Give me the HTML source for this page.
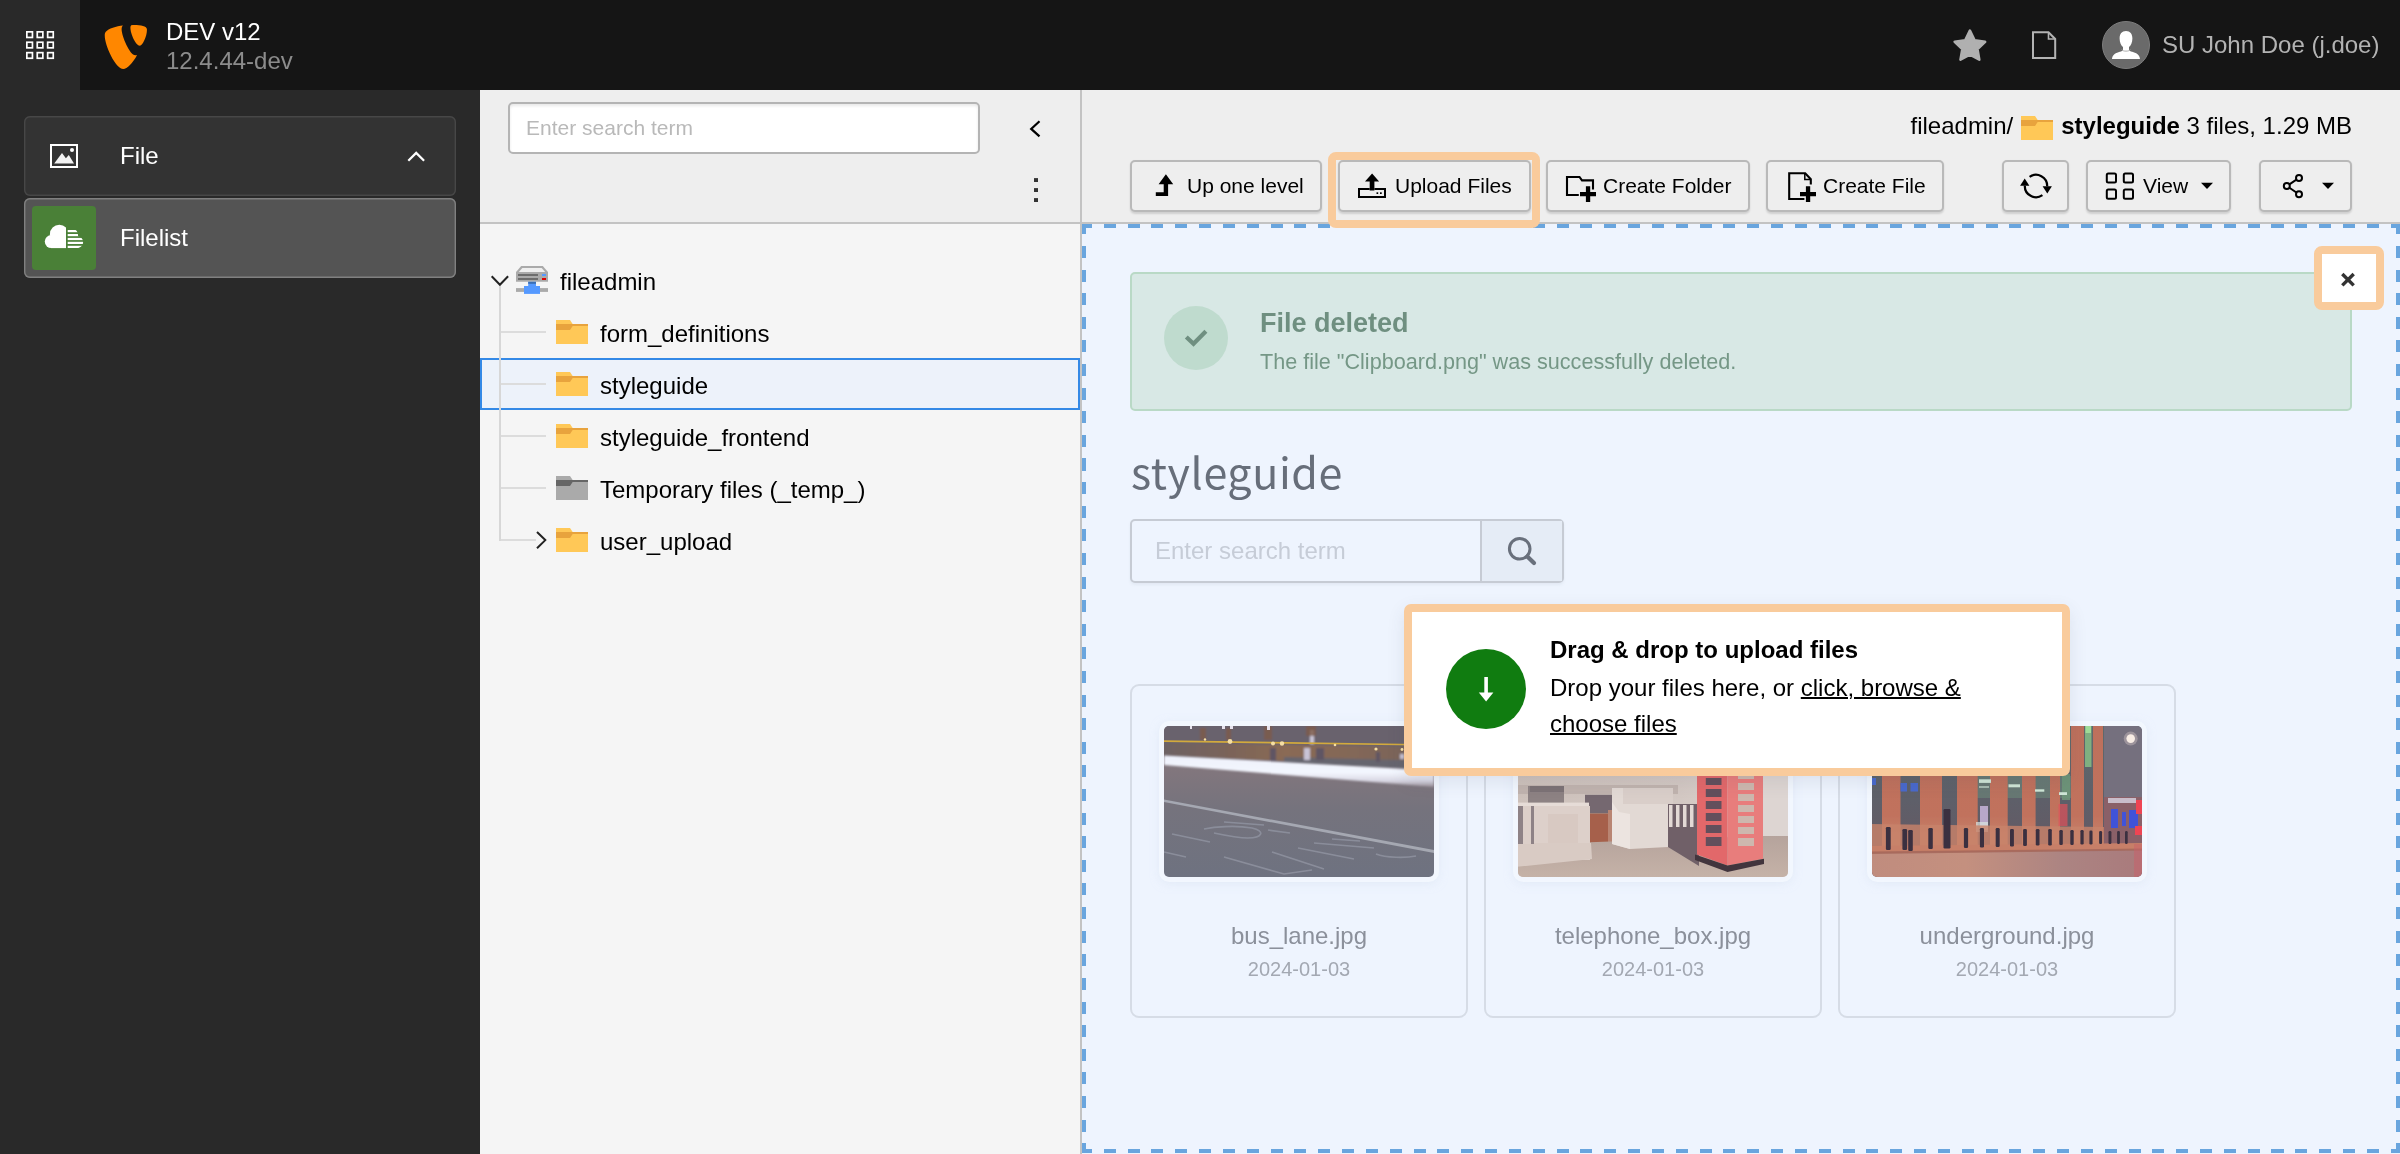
<!DOCTYPE html>
<html lang="en">
<head>
<meta charset="utf-8">
<title>TYPO3 Filelist</title>
<style>
*{box-sizing:border-box;margin:0;padding:0}
html,body{width:2400px;height:1154px;overflow:hidden;background:#292929}
body{will-change:transform;font-family:"Liberation Sans",sans-serif;font-size:24px;color:#000;position:relative}
svg{display:block;position:absolute;overflow:visible}
/* topbar */
#topbar{position:absolute;left:0;top:0;width:2400px;height:90px;background:#151515}
#toggle{position:absolute;left:0;top:0;width:80px;height:90px;background:#292929}
#site{position:absolute;left:166px;top:17px;color:#fff;font-size:24px;line-height:29px;white-space:nowrap}
#site .ver{color:#8c8c8c;display:block}
#user{position:absolute;left:2162px;top:31px;color:#b3b3b3;font-size:24px;line-height:28px;white-space:nowrap}
#avatar{position:absolute;left:2102px;top:21px;width:48px;height:48px;border-radius:50%;background:#6a6a6a;border:1px solid #7d7d7d;overflow:hidden}
/* sidebar */
#sidebar{position:absolute;left:0;top:90px;width:480px;height:1064px;background:#292929}
.mgroup{position:absolute;left:24px;top:26px;width:432px;height:80px;border-radius:6px;background:#333;box-shadow:inset 0 0 0 1.400px #474747}
.mitem{position:absolute;left:24px;top:108px;width:432px;height:80px;border-radius:6px;background:#545454;box-shadow:inset 0 0 0 1.400px #808080}
.mlabel{position:absolute;left:96px;top:26px;color:#fff;font-size:24px;line-height:28px}
.micon{position:absolute;left:8px;top:8px;width:64px;height:64px;border-radius:4px;background:#4a8037}
/* tree */
#tree{position:absolute;left:480px;top:90px;width:600px;height:1064px;background:#f5f5f5}
#treebar{position:absolute;left:0;top:0;width:600px;height:134px;background:#eee;border-bottom:2px solid #c3c3c3}
.tsearch{position:absolute;left:28px;top:12px;width:472px;height:52px;border:2px solid #b4b4b4;border-radius:5px;background:#fff;color:#b9b9b9;font-size:21px;line-height:48px;padding-left:16px;box-shadow:inset 0 2px 3px rgba(0,0,0,.09)}
.trow{position:absolute;left:0;width:600px;height:52px;font-size:24px;line-height:52px;white-space:nowrap}
.trow span{position:absolute;top:2px}
.trow.sel{background:#edf2fa;border:2px solid #3489e6}
.trow.sel span{top:0px;margin-left:-2px}
.vline{z-index:1;position:absolute;left:19px;top:196px;width:2px;height:255px;background:#d7d7d7}
.hline{position:absolute;left:21px;width:45px;height:2px;background:#dcdcdc}
/* content */
#content{position:absolute;left:1080px;top:90px;width:1320px;height:1064px;background:#eef4fe;border-left:2px solid #c3c3c3}
#dochead{position:absolute;left:0;top:0;width:1318px;height:134px;background:#eee;border-bottom:2px solid #c3c3c3}
.path{position:absolute;right:48px;top:20px;font-size:24px;line-height:32px;white-space:nowrap}
.path b{margin-left:0}.path svg{position:relative;display:inline-block;vertical-align:top;top:2px;margin:0 8px 0 8px}
.btn{position:absolute;top:70px;height:52px;border:2px solid #b9b9b9;border-radius:5px;background:#eee;box-shadow:0 1.500px 2px rgba(0,0,0,.13);font-size:21px;line-height:47px;white-space:nowrap;color:#000}
.btn span{position:absolute;top:0}
.hl{position:absolute;border:8px solid #f9cb9c;border-radius:8px}
#drop{position:absolute;left:0;top:134px;width:1318px;height:930px;background:#eef4fe;border:4px solid transparent;background-clip:border-box}
.dh{left:-4px;width:1318px;height:4px;background:repeating-linear-gradient(90deg,#69a5de -2px,#69a5de 10px,transparent 10px,transparent 21.830px)}
.dv{top:-4px;width:4px;height:929px;background:repeating-linear-gradient(180deg,#69a5de -1.600px,#69a5de 10.400px,transparent 10.400px,transparent 22.010px)}
#drop>*{position:absolute}
.alert{left:44px;top:44px;width:1222px;height:139px;border:2px solid #b9d9c6;border-radius:5px;background:#d8e8e5}
.alert .circ{position:absolute;left:32px;top:32px;width:64px;height:64px;border-radius:50%;background:#bfdbce}
.alert .ttl{position:absolute;left:128px;top:33px;font-size:27px;line-height:32px;font-weight:700;color:#6f8f80;white-space:nowrap}
.alert .msg{position:absolute;left:128px;top:73.500px;font-size:21.6px;line-height:28px;color:#759786;white-space:nowrap}
h1{left:45px;top:209px;letter-spacing:.6px;font-family:"Noto Sans CJK SC","Liberation Sans",sans-serif;font-weight:400;font-size:43px;line-height:66px;color:#676e7a;white-space:nowrap}
.search{left:44px;top:291px;width:434px;height:64px;border:2px solid #c6cbd4;border-radius:5px;background:#eef4fe;box-shadow:0 2px 3px rgba(100,110,130,.08)}
.search .ph{position:absolute;left:23px;top:0;font-size:24px;line-height:59px;color:#c6ccd7;white-space:nowrap}
.search .sb{position:absolute;left:348px;top:0;width:82px;height:60px;border-left:2px solid #c6cbd4;background:#e5ecf6}
.card{top:456px;width:338px;height:334px;border:2px solid #d6dce6;border-radius:9px;text-align:center}
.card .th{position:absolute;left:32px;top:40px;width:270px;height:151px;border-radius:5px;overflow:hidden;box-shadow:0 0 0 5px rgba(243,247,254,.9),0 2px 10px 4px rgba(214,224,240,.55)}
.card .fn{position:absolute;left:0;width:100%;top:234px;font-size:24px;line-height:32px;color:#8b909b;white-space:nowrap}
.card .dt{position:absolute;left:0;width:100%;top:269px;font-size:20px;line-height:28px;color:#a3a8b2;white-space:nowrap}
.pop{left:318px;top:376px;width:666px;height:172px;border:8px solid #f9cb9c;border-radius:7px;background:#fff;box-shadow:0 6px 18px rgba(60,70,90,.10)}
.pop .gc{position:absolute;left:34px;top:37px;width:80px;height:80px;border-radius:50%;background:#107c10}
.pop .ttl{position:absolute;left:138px;top:20px;font-size:24px;line-height:36px;font-weight:700;white-space:nowrap}
.pop .txt{position:absolute;left:138px;top:58px;width:480px;font-size:24px;line-height:36px}

.close{left:1228px;top:18px;width:70px;height:64px;border:8px solid #f9cb9c;border-radius:8px;background:#fff}
.pop .txt u{text-decoration-thickness:1.500px}
</style>
</head>
<body>
<div id="topbar">
  <div id="toggle"><svg style="left:24px;top:29px" width="32" height="32" viewBox="24 29 32 32" ><g fill="none" stroke="#fff" stroke-width="1.7"><rect x="26.85" y="31.85" width="5.6" height="5.6"/><rect x="37.25" y="31.85" width="5.6" height="5.6"/><rect x="47.65" y="31.85" width="5.6" height="5.6"/><rect x="26.85" y="42.25" width="5.6" height="5.6"/><rect x="37.25" y="42.25" width="5.6" height="5.6"/><rect x="47.65" y="42.25" width="5.6" height="5.6"/><rect x="26.85" y="52.65" width="5.6" height="5.6"/><rect x="37.25" y="52.65" width="5.6" height="5.6"/><rect x="47.65" y="52.65" width="5.6" height="5.6"/></g></svg></div>
  <svg style="left:96.500px;top:18.400px" width="56.300" height="56.300" viewBox="0 0 16 16"><path fill="#ff8700" d="M11.4 10.5c-.2.1-.3.1-.5.1-1.6 0-3.900-5.500-3.900-7.400 0-.7.200-.9.400-1.100-1.900.2-4.200.9-4.900 1.800-.2.200-.3.600-.3 1.100 0 2.900 3.100 9.500 5.300 9.500 1 0 2.700-1.700 3.900-4M10.600 2c1.800 0 3.600.3 3.600 1.300 0 2.100-1.300 4.600-2 4.600-1.200 0-2.700-3.400-2.700-5.100 0-.8.300-.8 1.100-.8"/></svg>
  <div id="site">DEV v12<span class="ver">12.4.44-dev</span></div>
  <svg style="left:1950px;top:25px" width="40" height="40" viewBox="1950 25 40 40" ><polygon points="1969.90,30.70 1974.60,40.23 1985.12,41.76 1977.51,49.17 1979.30,59.64 1969.90,54.70 1960.50,59.64 1962.29,49.17 1954.68,41.76 1965.20,40.23" fill="#b0b0b0" stroke="#b0b0b0" stroke-width="2.600" stroke-linejoin="round"/></svg>
  <svg style="left:2030px;top:29px" width="28" height="32" viewBox="2030 29 28 32" ><path d="M2033 32.2H2048.5L2055.2 39V58H2033Z" fill="none" stroke="#b3b3b3" stroke-width="2"/><path d="M2048.5 32.2V39H2055.2" fill="none" stroke="#b3b3b3" stroke-width="1.6"/></svg>
  <div id="avatar"><svg style="left:0px;top:0px" width="46" height="46" viewBox="2103 22 46 46" ><path d="M2126 31c4.200 0 6.400 3 6.400 7.400 0 3.600-1.600 7.200-3.400 8.600v2.200c0 1.400 1.200 2 3.200 2.600 3.800 1.100 7.300 2.600 7.800 7.200h-28c.5-4.600 4-6.100 7.800-7.200 2-.6 3.200-1.200 3.200-2.600v-2.200c-1.800-1.400-3.400-5-3.400-8.600 0-4.400 2.200-7.400 6.400-7.400z" fill="#fff"/><path d="M2121.500 49.500c1.300 2.200 7.700 2.200 9 0" fill="none" stroke="#999" stroke-width=".8"/></svg></div>
  <div id="user">SU John Doe (j.doe)</div>
</div>
<div id="sidebar">
  <div class="mgroup"><svg style="left:24px;top:26px" width="32" height="28" viewBox="48 142 32 28" ><rect x="51" y="145" width="26" height="22" fill="none" stroke="#fff" stroke-width="2"/><path d="M54.200 163.500L62 153l3.900 5.200 2.900-3.200 5.200 8.500z" fill="#f2f2f2"/><circle cx="72" cy="150" r="2" fill="#fff"/></svg><div class="mlabel">File</div><svg style="left:380px;top:32px" width="24" height="18" viewBox="404 148 24 18" ><path d="M408.300 160.800L416.200 152.900 424.100 160.800" fill="none" stroke="#fff" stroke-width="2.200"/></svg></div>
  <div class="mitem"><div class="micon"><svg style="left:0px;top:0px" width="64" height="64" viewBox="32 206 64 64" ><clipPath id="cl"><rect x="40" y="220" width="26" height="32"/></clipPath><g clip-path="url(#cl)" fill="#fff"><circle cx="59.300" cy="234.200" r="9.400"/><circle cx="51.300" cy="241.600" r="6.500"/><rect x="51" y="238" width="20" height="10.100"/></g><clipPath id="cr"><path d="M67 229.500h6.500c3 0 4.600 2.600 4.600 6.700 3 .6 5 3 5 5.900 0 3.600-2.600 6-6 6H67z"/></clipPath><g clip-path="url(#cr)" fill="#fff"><rect x="67.700" y="230" width="18" height="2.200"/><rect x="67.700" y="234" width="18" height="2.200"/><rect x="67.700" y="237.9" width="18" height="2.200"/><rect x="67.700" y="241.8" width="18" height="2.200"/><rect x="67.700" y="245.8" width="18" height="2.200"/></g></svg></div><div class="mlabel">Filelist</div></div>
</div>
<div id="tree">
  <div id="treebar"><div class="tsearch">Enter search term</div><svg style="left:546px;top:26px" width="20" height="26" viewBox="1026 116 20 26" ><path d="M1039.500 121.300L1031.200 128.900 1039.500 136.400" fill="none" stroke="#000" stroke-width="2.200"/></svg><svg style="left:552px;top:86px" width="8" height="28" viewBox="1032 176 8 28" ><g fill="#333"><rect x="1034" y="178.100" width="4" height="3.900"/><rect x="1034" y="188.100" width="4" height="3.900"/><rect x="1034" y="198.100" width="4" height="3.900"/></g></svg></div>
  <div class="vline"></div>
  <div class="hline" style="top:241px"></div>
  <div class="hline" style="top:345px"></div>
  <div class="hline" style="top:397px"></div>
  <div class="hline" style="top:449px;width:35px"></div>
  <div class="trow" style="top:164px"><svg style="left:8px;top:18px" width="24" height="18" viewBox="488 272 24 18" ><path d="M491.700 276.300L499.900 284.800 508.100 276.300" fill="none" stroke="#222" stroke-width="2"/></svg><svg style="left:36px;top:10px" width="32" height="32" viewBox="516 264 32 32" ><path d="M521.200 266h21.600l5.200 6v9.800h-32V272z" fill="#aaa"/><path d="M522.300 268h19.400l3.500 4h-26.400z" fill="#efefef"/>
<rect x="518" y="274.100" width="20" height="1.800" fill="#666"/><rect x="518" y="278.100" width="20" height="1.800" fill="#666"/>
<rect x="542" y="274" width="4" height="2" fill="#59f"/><rect x="542" y="278" width="4" height="2" fill="#d00"/>
<rect x="516" y="288.100" width="32" height="3.800" fill="#aaa"/>
<rect x="528.200" y="281.800" width="7.800" height="5" fill="#59f"/><rect x="528.200" y="281.800" width="7.800" height="2" fill="#3b6fb5"/>
<rect x="524" y="286" width="16" height="7.900" fill="#59f"/></svg><span style="left:80px">fileadmin</span></div>
  <div class="trow" style="top:216px"><svg style="left:76px;top:10px" width="32" height="32" viewBox="0 0 32 32"><path d="M0 4h14l2.660 4H32v20H0z" fill="#ffc857"/><path d="M32 10H16.660L14 14H0V8h32z" fill="#e8a33d"/></svg><span style="left:120px">form_definitions</span></div>
  <div class="trow sel" style="top:268px"><div class="hline" style="left:19px;top:23px"></div><svg style="left:74px;top:8px" width="32" height="32" viewBox="0 0 32 32"><path d="M0 4h14l2.660 4H32v20H0z" fill="#ffc857"/><path d="M32 10H16.660L14 14H0V8h32z" fill="#e8a33d"/></svg><span style="left:120px">styleguide</span></div>
  <div class="trow" style="top:320px"><svg style="left:76px;top:10px" width="32" height="32" viewBox="0 0 32 32"><path d="M0 4h14l2.660 4H32v20H0z" fill="#ffc857"/><path d="M32 10H16.660L14 14H0V8h32z" fill="#e8a33d"/></svg><span style="left:120px">styleguide_frontend</span></div>
  <div class="trow" style="top:372px"><svg style="left:76px;top:10px" width="32" height="32" viewBox="0 0 32 32"><path d="M0 4h14l2.660 4H32v20H0z" fill="#aaa"/><path d="M32 10H16.660L14 14H0V8h32z" fill="#666"/></svg><span style="left:120px">Temporary files (_temp_)</span></div>
  <div class="trow" style="top:424px"><svg style="left:52px;top:14px" width="18" height="24" viewBox="532 528 18 24" ><path d="M537 532l8.300 8.100-8.300 8.100" fill="none" stroke="#222" stroke-width="2"/></svg><svg style="left:76px;top:10px" width="32" height="32" viewBox="0 0 32 32"><path d="M0 4h14l2.660 4H32v20H0z" fill="#ffc857"/><path d="M32 10H16.660L14 14H0V8h32z" fill="#e8a33d"/></svg><span style="left:120px">user_upload</span></div>
</div>
<div id="content">
  <div id="dochead">
    <div class="path">fileadmin/<svg width="32" height="32" viewBox="0 0 32 32"><path d="M0 4h14l2.660 4H32v20H0z" fill="#ffc857"/><path d="M32 10H16.660L14 14H0V8h32z" fill="#e8a33d"/></svg><b>styleguide</b> 3 files, 1.29 MB</div>
    <div class="btn" style="left:48px;width:192px"><svg style="left:20px;top:8px" width="26" height="30" viewBox="1152 170 26 30" ><path d="M1165.900 174.200L1173.200 184.300H1168.100V196H1155.800V192.300H1163.700V184.300H1158.600Z" fill="#000"/></svg><span style="left:55px">Up one level</span></div>
    <div class="btn" style="left:256px;width:193px"><svg style="left:16px;top:8px" width="32" height="30" viewBox="1356 170 32 30" ><path d="M1372.100 173.400L1379.100 181.600H1374.400V190.500H1369.700V181.600H1365Z" fill="#000"/><path d="M1369.700 189H1359V197H1385V189H1374.400" fill="none" stroke="#000" stroke-width="2"/><rect x="1376.500" y="192.300" width="1.700" height="1.700"/><rect x="1380" y="192.300" width="1.700" height="1.700"/></svg><span style="left:55px">Upload Files</span></div>
    <div class="btn" style="left:464px;width:204px"><svg style="left:16px;top:10px" width="34" height="32" viewBox="1564 172 34 32" ><path d="M1578.800 195H1567V177H1579.500L1582 180.400H1593V189.500" fill="none" stroke="#000" stroke-width="2.100"/><path d="M1580 192H1596V196.300H1580zM1585.900 186.200H1590.200V201.900H1585.900z" fill="#000"/></svg><span style="left:55px">Create Folder</span></div>
    <div class="btn" style="left:684px;width:178px"><svg style="left:18px;top:8px" width="32" height="34" viewBox="1786 170 32 34" ><path d="M1804.400 199H1789.200V173.200H1805.200L1810.800 179.200V184.500" fill="none" stroke="#000" stroke-width="2.100"/><path d="M1804.800 173.500V179.600H1810.600" fill="none" stroke="#000" stroke-width="1.500"/><path d="M1800 192H1816V196.300H1800zM1805.900 186.200H1810.200V201.900H1805.900z" fill="#000"/></svg><span style="left:55px">Create File</span></div>
    <div class="btn" style="left:920px;width:67px"><svg style="left:14px;top:8px" width="36" height="32" viewBox="2018 170 36 32" ><path d="M2029.58 176.83A11.2 11.2 0 0 1 2047.19 186.39" fill="none" stroke="#000" stroke-width="2.200"/><path d="M2024.81 185.61A11.2 11.2 0 0 0 2042.42 195.17" fill="none" stroke="#000" stroke-width="2.200"/><path d="M2024.700 178.600L2029.400 185.800H2020.100Z" fill="#000"/><path d="M2047.300 193.400L2042.600 186.200H2051.900Z" fill="#000"/></svg></div>
    <div class="btn" style="left:1004px;width:145px"><svg style="left:16px;top:8px" width="32" height="32" viewBox="2104 170 32 32" ><g fill="none" stroke="#000" stroke-width="2"><rect x="2106.8" y="173.4" width="9.200" height="9.200" rx="1.500"/><rect x="2106.8" y="189.6" width="9.200" height="9.200" rx="1.500"/><rect x="2123.8" y="173.4" width="9.200" height="9.200" rx="1.500"/><rect x="2123.8" y="189.6" width="9.200" height="9.200" rx="1.500"/></g></svg><span style="left:55px">View</span><svg style="left:112px;top:19px" width="14" height="9" viewBox="2200 181 14 9" ><path d="M2201 182.800H2213L2207 188.900Z" fill="#000"/></svg></div>
    <div class="btn" style="left:1177px;width:93px"><svg style="left:19px;top:10px" width="26" height="28" viewBox="2280 172 26 28" ><g fill="none" stroke="#000" stroke-width="2"><circle cx="2299" cy="178" r="3"/><circle cx="2286.800" cy="186" r="3"/><circle cx="2299" cy="194.200" r="3"/><path d="M2289.400 184.300L2296.400 179.700M2289.400 187.700L2296.400 192.500"/></g></svg><svg style="left:60px;top:19px" width="14" height="9" viewBox="2321 181 14 9" ><path d="M2322 182.800H2334L2328 188.900Z" fill="#000"/></svg></div>
  </div>
  <div id="drop">
    <div class="dh" style="top:-4px"></div><div class="dh" style="top:921px"></div><div class="dv" style="left:-4px"></div><div class="dv" style="left:1310px"></div>
    <div class="alert"><div class="circ"><svg style="left:16px;top:18px" width="32" height="28" viewBox="1180 324 32 28" ><path d="M1186.300 337L1193.500 343.800 1205.900 331.300" fill="none" stroke="#6f8f80" stroke-width="4.200"/></svg></div><div class="ttl">File deleted</div><div class="msg">The file "Clipboard.png" was successfully deleted.</div></div>
    <h1>styleguide</h1>
    <div class="search"><div class="ph">Enter search term</div><div class="sb"><svg style="left:22px;top:13px" width="36" height="36" viewBox="1504 534 36 36" ><circle cx="1519.700" cy="548.800" r="10.300" fill="none" stroke="#69707c" stroke-width="3"/><path d="M1527.300 556.400L1534 563" fill="none" stroke="#69707c" stroke-width="4.200" stroke-linecap="round"/></svg></div></div>
    <div class="card" style="left:44px"><div class="th"><svg style="left:0;top:0" width="270" height="151" viewBox="0 0 270 151" preserveAspectRatio="none"><defs>
<linearGradient id="b1" x1="0" y1="0" x2="0" y2="1"><stop offset="0" stop-color="#857a80"/><stop offset=".3" stop-color="#81767d"/><stop offset=".55" stop-color="#75737d"/><stop offset="1" stop-color="#6e7280"/></linearGradient>
<linearGradient id="b2" x1="0" y1="0" x2="1" y2="0"><stop offset="0" stop-color="#6c6264"/><stop offset=".22" stop-color="#79635a"/><stop offset=".45" stop-color="#8a6a54"/><stop offset=".7" stop-color="#836758"/><stop offset="1" stop-color="#75635c"/></linearGradient>
<linearGradient id="b3" x1="0" y1="0" x2="0" y2="1"><stop offset="0" stop-color="#eef1fb"/><stop offset=".55" stop-color="#f3f6fe"/><stop offset=".8" stop-color="#d9d8e4"/><stop offset="1" stop-color="#9d929b"/></linearGradient>
<filter id="bl" x="-5%" y="-5%" width="110%" height="110%"><feGaussianBlur stdDeviation=".8"/></filter>
</defs>
<rect width="270" height="151" fill="url(#b1)"/>
<g filter="url(#bl)">
<polygon points="-3,-3 273,-3 273,46 -3,31" fill="#69626d"/>
<polygon points="-3,17 273,21 273,41 -3,30" fill="url(#b2)"/>
<polygon points="120,31 273,35 273,44 120,38" fill="#66656e"/>
<g fill="#5e5563"><rect x="106" y="22" width="6" height="13"/><rect x="152" y="22" width="8" height="12"/><rect x="212" y="26" width="4" height="10"/></g>
<g fill="#c9c4d6"><rect x="140" y="22" width="6" height="12"/><rect x="146" y="4" width="4" height="14"/><rect x="236" y="28" width="4" height="5"/></g>
<g fill="#7d5a4a" opacity=".8"><rect x="36" y="2" width="6" height="12"/><rect x="62" y="2" width="5" height="12"/><rect x="100" y="0" width="8" height="14"/><rect x="142" y="0" width="10" height="10"/></g>
</g>
<polygon points="0,14.300 270,18.200 270,19.800 0,15.900" fill="#d3aa3c"/>
<g fill="#f6dfa4"><circle cx="66" cy="15.500" r="2.400"/><circle cx="109" cy="17.500" r="2"/><circle cx="118" cy="17.500" r="2.200"/><circle cx="41" cy="13.500" r="1.200"/><circle cx="212" cy="23" r="1.600"/><circle cx="238" cy="23.500" r="1.400"/><circle cx="171" cy="19" r="1.300"/></g>
<g fill="#e8e4ee"><rect x="26" y="0" width="2" height="3"/><rect x="58" y="0" width="3" height="3"/><rect x="66" y="0" width="3" height="3"/><rect x="103" y="0" width="3" height="4"/></g>
<polygon points="0,29.400 270,44.500 270,61 0,39" fill="url(#b3)" filter="url(#bl)"/>
<polygon points="0,73.500 270,124 270,127 0,76" fill="#a5a8b2"/>
<g stroke="#8d909d" stroke-width="1.700" fill="none" opacity=".9"><path d="M8 108l38 8M40 103c10 -2 30 -4 48 -1c14 3 10 10 -4 10c-10 0 -20 -2 -34 -5M60 96l40 3M104 104l22 3M0 126l22 5M60 131l60 17 28 -4M108 126l52 17M134 122l56 11M150 117l60 5M168 113l28 2M212 128c10 4 30 4 40 2"/></g></svg></div><div class="fn">bus_lane.jpg</div><div class="dt">2024-01-03</div></div>
    <div class="card" style="left:398px"><div class="th"><svg style="left:0;top:0" width="270" height="151" viewBox="0 0 270 151" preserveAspectRatio="none"><defs>
<linearGradient id="p1" x1="0" y1="0" x2="1" y2="0"><stop offset="0" stop-color="#cdc1bb"/><stop offset=".6" stop-color="#d3c8c3"/><stop offset="1" stop-color="#dfd6d2"/></linearGradient>
<linearGradient id="p2" x1="0" y1="0" x2="0" y2="1"><stop offset="0" stop-color="#b5a39c"/><stop offset="1" stop-color="#c6b3a8"/></linearGradient>
<filter id="pb" x="-5%" y="-5%" width="110%" height="110%"><feGaussianBlur stdDeviation=".7"/></filter>
</defs>
<rect width="270" height="151" fill="url(#p1)"/>
<g filter="url(#pb)">
<rect x="-3" y="59" width="163" height="9" fill="#c0b3ae"/>
<rect x="10" y="60" width="36" height="17" fill="#8d8283"/><rect x="12" y="60" width="34" height="6" fill="#7c7275"/>
<polygon points="67,68.700 101,68.700 92.500,87.500 67,87.500" fill="#75686f"/>
<rect x="67.500" y="87.500" width="24.500" height="30" fill="#a6614b"/><rect x="90" y="84" width="4" height="33" fill="#b98573"/>
<polygon points="-3,119 273,109 273,154 -3,154" fill="url(#p2)"/>
<rect x="-3" y="76.600" width="74" height="4" fill="#e6dcd7"/>
<rect x="16" y="80" width="56" height="54" fill="#ddd0ca"/><rect x="30" y="88" width="30" height="34" fill="#d8c9c2"/>
<polygon points="-3,117 73,117 74,133 -3,141" fill="#d9cbc4"/>
<rect x="-3" y="80" width="19" height="38" fill="#8e8286"/><rect x="5" y="80" width="8" height="38" fill="#dccfc9"/>
<polygon points="94,62 150,62 150,121 112,123 94,118" fill="#e2d9d4"/><polygon points="101,86 94,76 94,118 112,123 112,88" fill="#ece4e0"/>
<rect x="105" y="62" width="50" height="16" fill="#d9cec9"/>
<polygon points="150,78 181,78 181,140 150,121" fill="#6f6168"/>
<g fill="#e3d9d5"><rect x="151" y="79" width="3.500" height="22"/><rect x="158" y="79" width="3.500" height="22"/><rect x="165" y="79" width="3.500" height="22"/><rect x="172" y="79" width="3.500" height="22"/></g>
<rect x="245" y="40" width="28" height="70" fill="#ddd5d2"/>
<polygon points="179,40 209.500,40 209.500,139.500 179,128.600" fill="#e2676a"/>
<polygon points="209.500,40 245,40 245,132.800 209.500,139.500" fill="#e87d7c"/>
<g fill="#63505c"><rect x="187.800" y="52" width="15.700" height="7"/><rect x="187.800" y="63" width="15.700" height="8"/><rect x="187.800" y="75" width="15.700" height="8"/><rect x="187.800" y="87" width="15.700" height="8"/><rect x="187.800" y="99" width="15.700" height="8"/><rect x="187.800" y="111" width="15.700" height="9"/></g>
<g fill="#cdb8ae"><rect x="220" y="46" width="16" height="7"/><rect x="220" y="57" width="16" height="7"/><rect x="220" y="68" width="16" height="7"/><rect x="220" y="79" width="16" height="7"/><rect x="220" y="90" width="16" height="7"/><rect x="220" y="101" width="16" height="7"/><rect x="220" y="112" width="16" height="8"/></g>
<polygon points="177,128.600 209.500,139.500 246,132.800 246,138 209.500,146 177,134" fill="#43353c"/>
</g></svg></div><div class="fn">telephone_box.jpg</div><div class="dt">2024-01-03</div></div>
    <div class="card" style="left:752px"><div class="th"><svg style="left:0;top:0" width="270" height="151" viewBox="0 0 270 151" preserveAspectRatio="none"><defs>
<linearGradient id="u1" x1="0" y1="0" x2="1" y2="0"><stop offset="0" stop-color="#c08c7e"/><stop offset=".35" stop-color="#c4907f"/><stop offset=".7" stop-color="#ac8482"/><stop offset="1" stop-color="#a97a7c"/></linearGradient>
<linearGradient id="u2" x1="0" y1="0" x2="0" y2="1"><stop offset="0" stop-color="#bd705c"/><stop offset=".75" stop-color="#c1725d"/><stop offset="1" stop-color="#c88872"/></linearGradient>
<linearGradient id="u3" x1="0" y1="0" x2="0" y2="1"><stop offset="0" stop-color="#5f6a6c"/><stop offset=".5" stop-color="#5e5f69"/><stop offset="1" stop-color="#6a5560"/></linearGradient>
<filter id="ub" x="-5%" y="-5%" width="110%" height="110%"><feGaussianBlur stdDeviation=".7"/></filter>
</defs>
<rect width="270" height="151" fill="url(#u3)"/>
<g filter="url(#ub)">
<rect x="232" y="-3" width="41" height="75" fill="#746f7e"/>
<rect x="232" y="71" width="41" height="50" fill="#8a6068"/>
<rect x="100" y="50" width="100" height="22" fill="#6f8c7c" opacity=".55"/>
<rect x="10" y="-3" width="18.5" height="124" fill="url(#u2)"/><rect x="48" y="-3" width="22" height="124" fill="url(#u2)"/><rect x="85" y="-3" width="20.7" height="124" fill="url(#u2)"/><rect x="118" y="-3" width="17.7" height="124" fill="url(#u2)"/><rect x="150" y="-3" width="13.6" height="124" fill="url(#u2)"/><rect x="178" y="-3" width="10" height="124" fill="url(#u2)"/><rect x="199" y="-3" width="13" height="124" fill="url(#u2)"/><rect x="221" y="-3" width="10" height="124" fill="url(#u2)"/><rect x="213" y="-3" width="6.500" height="44" fill="#7fb081"/><rect x="213.500" y="-3" width="5.500" height="10" fill="#9fdc98"/>
<rect x="190" y="48" width="8" height="26" fill="#6f9a7b" opacity=".8"/>
<g fill="#4a69cc"><rect x="28.500" y="57" width="6.500" height="8.500"/><rect x="38.500" y="57" width="7.500" height="8.500"/><rect x="0" y="52" width="4" height="7"/></g>
<g fill="#cfe6d6"><rect x="107" y="53.300" width="12" height="3.600"/><rect x="136.500" y="58.300" width="11.500" height="3"/><rect x="163" y="63.300" width="9.300" height="2.400"/><rect x="187" y="66.200" width="8" height="2.800"/><rect x="107" y="60" width="10" height="2" opacity=".6"/></g>
<rect x="108" y="80" width="8" height="24" fill="#c8b4da" opacity=".85"/><rect x="104" y="96" width="12" height="10" fill="#d9e6e2" opacity=".7"/>
<rect x="186.500" y="78" width="9" height="22" fill="#e0525a" opacity=".7"/>
<g fill="#3f52d8"><rect x="239" y="83" width="7" height="19"/><rect x="250" y="86" width="4" height="14"/><rect x="257" y="84" width="9" height="18"/></g>
<g fill="#ee4552"><rect x="264" y="74" width="9" height="14"/><rect x="263" y="100" width="10" height="9"/></g>
<rect x="236" y="72" width="28" height="5" fill="#d8d4e2" opacity=".8"/>
<circle cx="258.700" cy="12.600" r="4.300" fill="#fff7ef"/><circle cx="258.700" cy="12.600" r="7" fill="#e8d6d0" opacity=".35"/>
<polygon points="-3,98 232,101 232,121 -3,121" fill="#c8836a" opacity=".82"/>
<polygon points="-3,120 273,117 273,128 -3,129" fill="#c77f67"/>
<polygon points="-3,127.500 273,124 273,154 -3,154" fill="url(#u1)"/>
<polygon points="-3,125.500 273,122.500 273,124.500 -3,128" fill="#9c6258" opacity=".7"/>
<rect x="262" y="118" width="11" height="36" fill="#c9606a" opacity=".5"/>
</g>
<g fill="#3b3040"><rect x="13.9" y="101" width="4.8" height="23" rx="1.2"/><rect x="30.4" y="103" width="4.7" height="21" rx="1.2"/><rect x="36.2" y="104" width="4.6" height="21" rx="1.2"/><rect x="56.3" y="102" width="4.5" height="21" rx="1.2"/><rect x="71.5" y="83" width="7.0" height="39.5" rx="1.2"/><rect x="91.9" y="102" width="4.2" height="20" rx="1.2"/><rect x="107.9" y="102" width="4.1" height="19.5" rx="1.2"/><rect x="123.7" y="102" width="4.0" height="19" rx="1.2"/><rect x="138.0" y="103" width="3.9" height="17.5" rx="1.2"/><rect x="151.1" y="103" width="3.8" height="17" rx="1.2"/><rect x="163.8" y="103" width="3.7" height="16.5" rx="1.2"/><rect x="176.2" y="103" width="3.6" height="16.5" rx="1.2"/><rect x="187.3" y="104" width="3.5" height="15" rx="1.2"/><rect x="198.3" y="104" width="3.4" height="15" rx="1.2"/><rect x="208.4" y="104" width="3.3" height="14.5" rx="1.2"/><rect x="217.4" y="104.5" width="3.1" height="14" rx="1.2"/><rect x="227.1" y="105" width="3.0" height="13" rx="1.2"/><rect x="236.5" y="105" width="2.9" height="13" rx="1.2"/><rect x="245.1" y="105" width="2.8" height="13" rx="1.2"/><rect x="253.0" y="105" width="2.7" height="13" rx="1.2"/></g></svg></div><div class="fn">underground.jpg</div><div class="dt">2024-01-03</div></div>
    <div class="pop"><div class="gc"><svg style="left:28px;top:23px" width="24" height="34" viewBox="1474 672 24 34" ><path d="M1484.300 677H1487.900V692.500H1493.400L1486.100 701.600L1478.800 692.500H1484.300Z" fill="#fff"/></svg></div><div class="ttl">Drag &amp; drop to upload files</div><div class="txt">Drop your files here, or <u>click, browse &amp; choose files</u></div></div>
    <div class="close"><svg style="left:16px;top:16px" width="20" height="20" viewBox="2338 270 20 20" ><path d="M2342.300 274L2353.700 285.400M2353.700 274L2342.300 285.400" fill="none" stroke="#333" stroke-width="3.400"/></svg></div>
  </div>
  <div class="hl" style="left:246px;top:62px;width:212px;height:76px"></div>
</div>
</body>
</html>
